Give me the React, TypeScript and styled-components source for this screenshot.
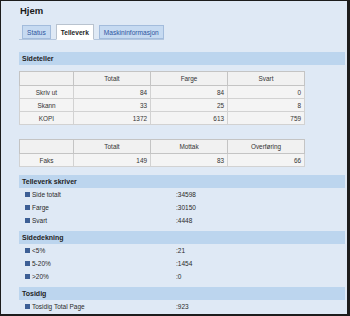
import styled, { createGlobalStyle } from "styled-components";

const GlobalStyle = createGlobalStyle`
    body {
        margin: 0;
        font-family: "Liberation Sans", Arial, sans-serif;
    }
`;

const Frame = styled.div`
    width: 350px;
    height: 316px;
    box-sizing: border-box;
    border-style: solid;
    border-color: #1c1c1c;
    border-width: 1px 3px 2px 1px;
    background-color: #dfe9f5;
    padding-left: 18px;
    overflow: hidden;
`;

const Title = styled.h1`
    margin: 4px 0 0 1px;
    font-size: 9.5px;
    line-height: 12px;
    font-weight: bold;
    color: #1a1a1a;
`;

const TabRow = styled.div`
    display: flex;
    align-items: flex-end;
    gap: 5px;
    width: 142px;
    margin-top: 7px;
    padding-left: 3px;
    border-bottom: 1px solid #b3c6de;
`;

const Tab = styled.div<{ $active?: boolean }>`
    box-sizing: border-box;
    height: ${(p) => (p.$active ? "16px" : "14px")};
    margin-bottom: ${(p) => (p.$active ? "-1px" : "0")};
    padding: 0 4px;
    display: flex;
    align-items: center;
    font-size: 6.6px;
    font-weight: ${(p) => (p.$active ? "bold" : "normal")};
    color: ${(p) => (p.$active ? "#1e1e1e" : "#2d55a0")};
    background-color: ${(p) => (p.$active ? "#ffffff" : "#c6daf1")};
    border: 1px solid ${(p) => (p.$active ? "#b9c3cf" : "#a3bcdc")};
    border-bottom-color: ${(p) => (p.$active ? "#ffffff" : "#a3bcdc")};
`;

const SectionBar = styled.div<{ $gap: number }>`
    margin: ${(p) => p.$gap}px 2px 0 0;
    height: 13px;
    line-height: 13px;
    padding-left: 3px;
    background-color: #bcd5ee;
    font-size: 7px;
    font-weight: bold;
    color: #1e1e1e;
`;

const Table = styled.table<{ $gap: number }>`
    margin-top: ${(p) => p.$gap}px;
    width: 285px;
    border-collapse: collapse;
    background-color: #f4f4f4;
    border: 1px solid #bdbdbd;
    font-size: 6.4px;
    color: #333;
    table-layout: fixed;
`;

const HeadCell = styled.th`
    height: 13px;
    padding: 0;
    font-weight: normal;
    text-align: center;
    border: 1px solid #c4c4c4;
    background-color: #f1f1f1;
`;

const Cell = styled.td<{ $label?: boolean }>`
    height: 12px;
    padding: 0 3px;
    text-align: ${(p) => (p.$label ? "center" : "right")};
    border: 1px solid #d2d2d2;
`;

const ItemRow = styled.div`
    display: grid;
    grid-template-columns: 157px 1fr;
    height: 13px;
    align-items: center;
    font-size: 6.5px;
    color: #2a2a2a;
`;

const ItemLabel = styled.div`
    display: flex;
    align-items: center;
    gap: 2px;
    padding-left: 6px;
    &::before {
        content: "";
        width: 5px;
        height: 5px;
        background-color: #3d5f95;
    }
`;

const counters = [
    { name: "Skriv ut", values: [84, 84, 0] },
    { name: "Skann", values: [33, 25, 8] },
    { name: "KOPI", values: [1372, 613, 759] },
];

const sections = [
    {
        title: "Telleverk skriver",
        gap: 8,
        items: [
            ["Side totalt", "34598"],
            ["Farge", "30150"],
            ["Svart", "4448"],
        ],
    },
    {
        title: "Sidedekning",
        gap: 4,
        items: [
            ["<5%", "21"],
            ["5-20%", "1454"],
            [">20%", "0"],
        ],
    },
    {
        title: "Tosidig",
        gap: 4,
        items: [["Tosidig Total Page", "923"]],
    },
];

const Cols = () => (
    <colgroup>
        <col style={{ width: 54 }} />
        <col style={{ width: 77 }} />
        <col style={{ width: 77 }} />
        <col style={{ width: 77 }} />
    </colgroup>
);

const App = () => {
    return (
        <>
            <GlobalStyle />
            <Frame>
                <Title>Hjem</Title>
                <TabRow>
                    <Tab>Status</Tab>
                    <Tab $active>Telleverk</Tab>
                    <Tab>Maskininformasjon</Tab>
                </TabRow>

                <SectionBar $gap={12}>Sideteller</SectionBar>
                <Table $gap={6}>
                    <Cols />
                    <thead>
                        <tr>
                            <HeadCell></HeadCell>
                            <HeadCell>Totalt</HeadCell>
                            <HeadCell>Farge</HeadCell>
                            <HeadCell>Svart</HeadCell>
                        </tr>
                    </thead>
                    <tbody>
                        {counters.map((row) => (
                            <tr key={row.name}>
                                <Cell $label>{row.name}</Cell>
                                {row.values.map((v, i) => (
                                    <Cell key={i}>{v}</Cell>
                                ))}
                            </tr>
                        ))}
                    </tbody>
                </Table>

                <Table $gap={14}>
                    <Cols />
                    <thead>
                        <tr>
                            <HeadCell></HeadCell>
                            <HeadCell>Totalt</HeadCell>
                            <HeadCell>Mottak</HeadCell>
                            <HeadCell>Overføring</HeadCell>
                        </tr>
                    </thead>
                    <tbody>
                        <tr>
                            <Cell $label>Faks</Cell>
                            <Cell>149</Cell>
                            <Cell>83</Cell>
                            <Cell>66</Cell>
                        </tr>
                    </tbody>
                </Table>

                {sections.map((section) => (
                    <div key={section.title}>
                        <SectionBar $gap={section.gap}>{section.title}</SectionBar>
                        {section.items.map(([label, value]) => (
                            <ItemRow key={label}>
                                <ItemLabel>{label}</ItemLabel>
                                <span>:{value}</span>
                            </ItemRow>
                        ))}
                    </div>
                ))}
            </Frame>
        </>
    );
};

export default App;
